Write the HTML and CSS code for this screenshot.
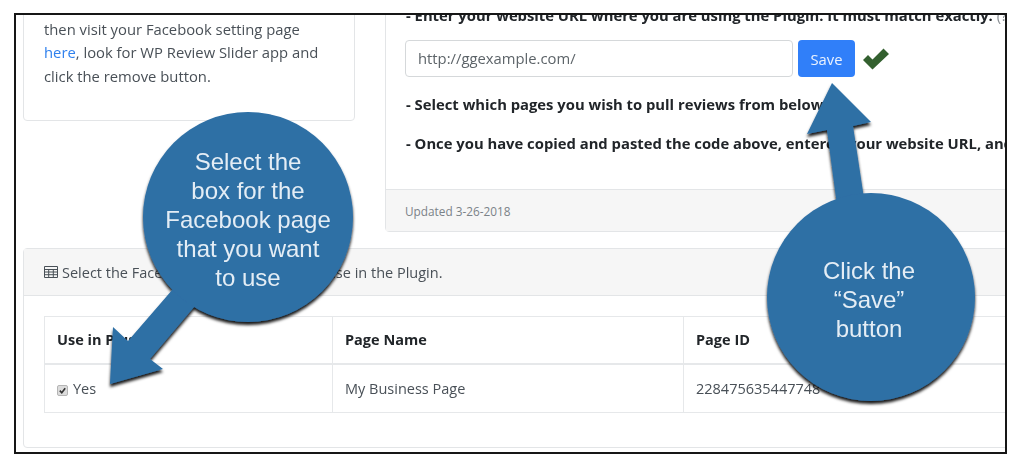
FILE: index.html
```html
<!DOCTYPE html>
<html lang="en">
<head>
<meta charset="utf-8">
<title>Select Facebook page</title>
<link rel="stylesheet" href="styles.css">
</head>
<body>
<main class="frame">
  <div class="content">
    <div class="top-row">
      <section class="card info-card">
        <p class="info-text">then visit your Facebook setting page <a class="link" href="#">here</a>, look for WP Review Slider app and click the remove button.</p>
      </section>
      <section class="card url-card">
        <div class="url-body">
          <p class="step step-first">- Enter your website URL where you are using the Plugin. It must match exactly. <span class="muted">(?)</span></p>
          <div class="url-form">
            <div class="url-input">http://ggexample.com/</div>
            <button class="save-btn" type="button">Save</button>
            <svg class="check" viewBox="0 0 28 22" aria-hidden="true"><path d="M1 12 L6 7 L10.500 11.500 L21.500 .5 L27 6 L10.500 21.500 Z" fill="#33602f"/></svg>
          </div>
          <p class="step">- Select which pages you wish to pull reviews from below.</p>
          <p class="step step-last">- Once you have copied and pasted the code above, entered your website URL, and selected your pages, click the button.</p>
        </div>
        <footer class="url-foot">Updated 3-26-2018</footer>
      </section>
    </div>
    <section class="card table-card">
      <header class="table-head">
        <svg class="table-icon" viewBox="0 0 14 12" aria-hidden="true"><path d="M.5.5h13v11H.5zM.5 3.500h13M.5 6h13M.5 8.700h13M4.700 3.500v8M9.300 3.500v8" fill="none" stroke="#495057" stroke-width="1"/></svg>
        <span>Select the Facebook Pages you want to use in the Plugin.</span>
      </header>
      <div class="table-body">
        <table class="pages">
          <thead>
            <tr><th class="col-a">Use in Plugin</th><th class="col-b">Page Name</th><th>Page ID</th></tr>
          </thead>
          <tbody>
            <tr>
              <td><span class="tick"><svg viewBox="0 0 10 10" aria-hidden="true"><path d="M2 5.200 4.200 7.500 8 2.500" fill="none" stroke="#333" stroke-width="1.800"/></svg></span>Yes</td>
              <td>My Business Page</td>
              <td>228475635447748</td>
            </tr>
          </tbody>
        </table>
      </div>
    </section>
  </div>

  <svg class="overlay" viewBox="16 15 989 437" aria-hidden="true">
    <defs>
      <filter id="shadow" x="-10%" y="-10%" width="120%" height="125%">
        <feDropShadow dx="0" dy="3" stdDeviation="1.500" flood-color="#000" flood-opacity=".9"/>
      </filter>
    </defs>
    <g filter="url(#shadow)" fill="#2e6fa5">
      <path d="M832 83 L871 122 L853 126 L865 205 L837 205 L827 130 L807 134 Z"/>
      <circle cx="871" cy="297" r="104"/>
      <path d="M110 384 L113 327 L128 341 L173 289 L200 300 L150 359 L163 369 Z"/>
      <circle cx="248" cy="217" r="105"/>
    </g>
  </svg>
  <div class="callout callout-left">Select the<br>box for the<br>Facebook page<br>that you want<br>to use</div>
  <div class="callout callout-right">Click the<br>“Save”<br>button</div>
</main>
</body>
</html>
```

FILE: styles.css
```css
* { box-sizing: border-box; }
html, body { margin: 0; background: #fff; }
body { padding: 13px 0 0 14px; font-family: "Open Sans", "Noto Sans", sans-serif; color: #495057; }

.frame {
  position: relative;
  width: 993px;
  height: 441px;
  border: 2px solid #161616;
  overflow: hidden;
  background: #fff;
}
.content {
  width: 1040px;
  margin-top: -31px;
  padding-left: 7px;
  font-size: 14.500px;
  filter: blur(.35px);
}
.card { border: 1px solid #e3e5e7; border-radius: 4px; background: #fff; }

.top-row { display: flex; align-items: flex-start; gap: 30px; font-size: 14.800px; }
.info-card { flex: 0 0 332px; height: 137px; padding: 33px 30px 0 20px; }
.info-text { margin: 0; line-height: 23.300px; }
.link { color: #2f80ed; text-decoration: none; }

.url-card { flex: 1; height: 248px; display: flex; flex-direction: column; min-width: 0; }
.url-body { flex: 1; padding: 0 19px 0 20px; overflow: hidden; }
.step { margin: 0; font-weight: 700; color: #212529; white-space: nowrap; line-height: 20px; }
.step-first { margin-top: 20px; }
.muted { font-weight: 400; color: #8a8f94; }
.url-form { display: flex; align-items: center; margin: 15px 0 17px -1px; }
.url-input {
  width: 388px;
  height: 37px;
  padding: 0 12px;
  border: 1px solid #d5d8da;
  border-radius: 4px;
  line-height: 35px;
  color: #5d6469;
}
.save-btn {
  width: 57px;
  height: 37px;
  margin-left: 5px;
  padding: 0;
  border: 0;
  border-radius: 4px;
  background: #307ff9;
  color: #eaf2ff;
  font: inherit;
}
.check { width: 28px; height: 22px; margin-left: 7px; }
.step-last { margin-top: 19px; }
.url-foot {
  height: 42px;
  padding: 0 19px;
  border-top: 1px solid #e3e5e7;
  background: #f6f6f6;
  font-size: 11.800px;
  line-height: 43px;
  color: #7b8288;
}

.table-card { margin-top: 16px; height: 200px; }
.table-head {
  display: flex;
  align-items: center;
  gap: 4px;
  height: 47px;
  padding: 0 20px;
  border-bottom: 1px solid #e3e5e7;
  background: #f6f6f6;
}
.table-icon { width: 14px; height: 12px; }
.table-body { padding: 20px 20px 0; }
.pages { width: 1000px; border-collapse: collapse; table-layout: fixed; }
.pages th, .pages td { border: 1px solid #e6e8ea; padding: 0 12px; text-align: left; }
.pages th { height: 47px; border-bottom-width: 2px; color: #212529; font-weight: 700; }
.pages td { height: 49px; }
.col-a { width: 288px; }
.col-b { width: 351px; }
.tick {
  display: inline-flex;
  width: 11px;
  height: 11px;
  margin-right: 5px;
  border: 1px solid #b5b5b5;
  border-radius: 2px;
  background: #dcdcdc;
  vertical-align: -1px;
}
.tick svg { width: 100%; height: 100%; }

.overlay { position: absolute; left: 0; top: 0; width: 989px; height: 437px; }
.callout {
  position: absolute;
  font-family: "Liberation Sans", Arial, sans-serif;
  font-size: 24px;
  line-height: 29px;
  text-align: center;
  color: #e4edf5;
}
.callout-left { left: 142px; top: 132px; width: 180px; }
.callout-right { left: 788px; top: 241px; width: 130px; }
```
